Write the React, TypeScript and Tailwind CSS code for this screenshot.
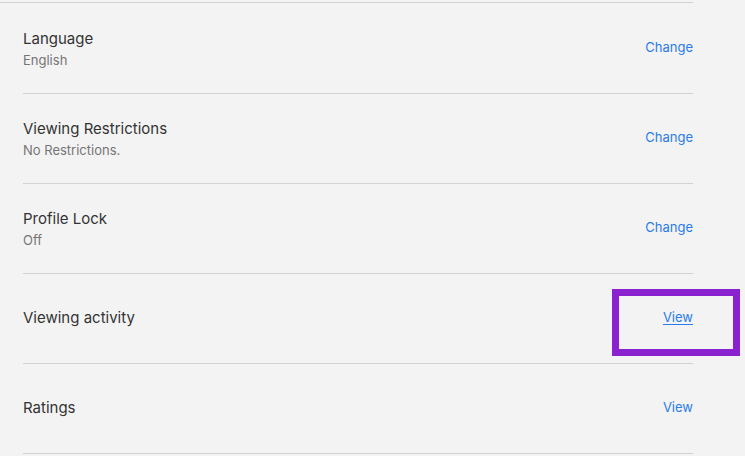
import React from "react";

type Row = { title: string; sub?: string; action: string; underline?: boolean };

const rows: Row[] = [
  { title: "Language", sub: "English", action: "Change" },
  { title: "Viewing Restrictions", sub: "No Restrictions.", action: "Change" },
  { title: "Profile Lock", sub: "Off", action: "Change" },
  { title: "Viewing activity", action: "View", underline: true },
  { title: "Ratings", action: "View" },
];

export default function App() {
  return (
    <div
      className="relative w-[745px] h-[456px] overflow-hidden bg-[#f3f3f3]"
      style={{ fontFamily: "Inter, 'Noto Sans', sans-serif" }}
    >
      <div className="pt-[2px] w-[693px]">
        <div className="h-px bg-[#d2d2d2]" />
        <div className="h-px" />
        <div className="pl-[23px]">
          {rows.map((r) => (
            <div
              key={r.title}
              className="h-[90px] flex items-center justify-between border-b border-[#d2d2d2]"
            >
              <div className={"flex flex-col " + (r.sub ? "mt-[1px]" : "mb-[2px]")}>
                <span className="text-[15px] leading-[20px] text-[#333333]">{r.title}</span>
                {r.sub && (
                  <span className="text-[13px] leading-[18px] mt-[2px] text-[#757575]">{r.sub}</span>
                )}
              </div>
              <span
                className={
                  "text-[13px] leading-[18px] text-[#2a7ce8] mb-[3px] " +
                  (r.underline ? "underline underline-offset-2" : "")
                }
              >
                {r.action}
              </span>
            </div>
          ))}
        </div>
      </div>
      <div className="absolute left-[612px] top-[289px] w-[128px] h-[67px] border-[7px] border-[#8b22d0]" />
    </div>
  );
}
